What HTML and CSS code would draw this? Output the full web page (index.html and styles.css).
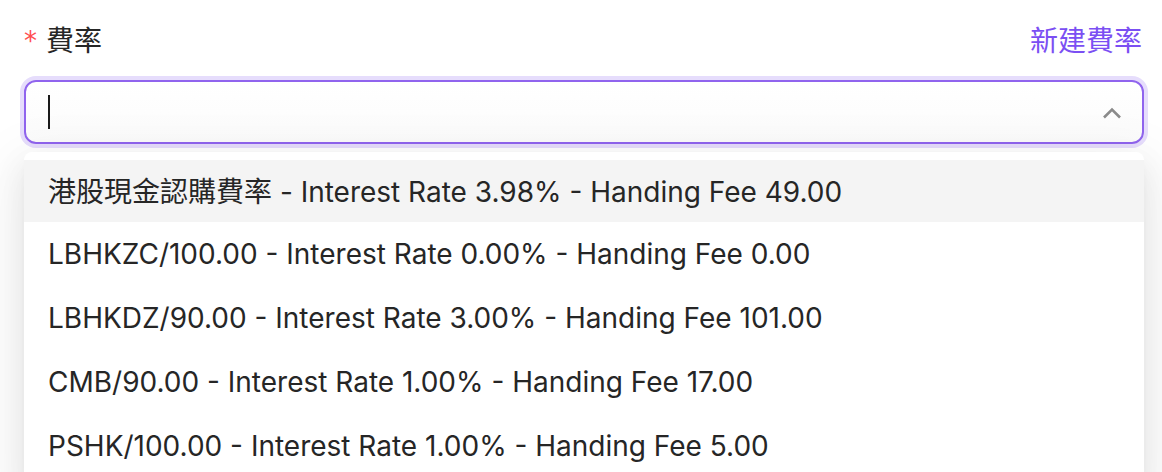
FILE: index.html
```html
<!DOCTYPE html>
<html lang="zh-Hant">
<head>
<meta charset="utf-8">
<link rel="stylesheet" href="styles.css">
</head>
<body>
<div class="field">
  <div class="field-head">
    <label class="label"><span class="req">*</span>費率</label>
    <a class="new-link">新建費率</a>
  </div>
  <div class="select">
    <span class="caret"></span>
    <svg class="chev" width="20" height="12" viewBox="0 0 20 12"><path d="M2 10.5 L10 2.5 L18 10.5" fill="none" stroke="#8a8a8a" stroke-width="2.6"/></svg>
  </div>
  <div class="dropdown">
    <div class="opt active">港股現金認購費率 - Interest Rate 3.98% - Handing Fee 49.00</div>
    <div class="opt">LBHKZC/100.00 - Interest Rate 0.00% - Handing Fee 0.00</div>
    <div class="opt">LBHKDZ/90.00 - Interest Rate 3.00% - Handing Fee 101.00</div>
    <div class="opt">CMB/90.00 - Interest Rate 1.00% - Handing Fee 17.00</div>
    <div class="opt">PSHK/100.00 - Interest Rate 1.00% - Handing Fee 5.00</div>
  </div>
</div>
</body>
</html>
```
FILE: styles.css
```css
html, body {
  margin: 0;
  padding: 0;
  background: #ffffff;
  overflow: hidden;
}
body {
  font-family: Inter, "Noto Sans CJK TC", sans-serif;
  color: #1f1f1f;
}
.field {
  padding: 17px 20px 0 24px;
}
.field-head {
  display: flex;
  justify-content: space-between;
  align-items: center;
  height: 44px;
  margin-bottom: 19px;
}
.label {
  font-size: 28px;
  color: #262626;
  display: flex;
  align-items: center;
}
.req {
  color: #ff4d4f;
  font-family: SimSun, "DejaVu Sans", sans-serif;
  font-size: 26px;
  margin-right: 9px;
  position: relative;
  top: 2px;
}
.new-link {
  font-size: 28px;
  color: #7b4ff3;
}
.select {
  box-sizing: border-box;
  height: 64px;
  width: 1120px;
  border: 2px solid #9064ee;
  border-radius: 12px;
  box-shadow: 0 0 0 4px #e6ddfc;
  background: linear-gradient(#ffffff, #fbfbfb);
  display: flex;
  align-items: center;
  justify-content: space-between;
  padding: 0 20px 0 22px;
}
.caret {
  width: 2px;
  height: 34px;
  background: #1a1a1a;
}
.chev {
  display: block;
  margin-top: 2px;
}
.dropdown {
  margin-top: 8px;
  width: 1120px;
  background: #ffffff;
  border-radius: 8px;
  padding: 8px 0;
  box-shadow: 0 12px 32px 0 rgba(0,0,0,0.08), 0 6px 12px -8px rgba(0,0,0,0.12), 0 18px 56px 16px rgba(0,0,0,0.05);
}
.opt {
  box-sizing: border-box;
  height: 62px;
  margin-bottom: 2px;
  display: flex;
  align-items: center;
  padding: 0 24px 3px;
  font-size: 28px;
  color: #262626;
  white-space: nowrap;
}
.opt.active {
  background: #f4f4f4;
}
```
